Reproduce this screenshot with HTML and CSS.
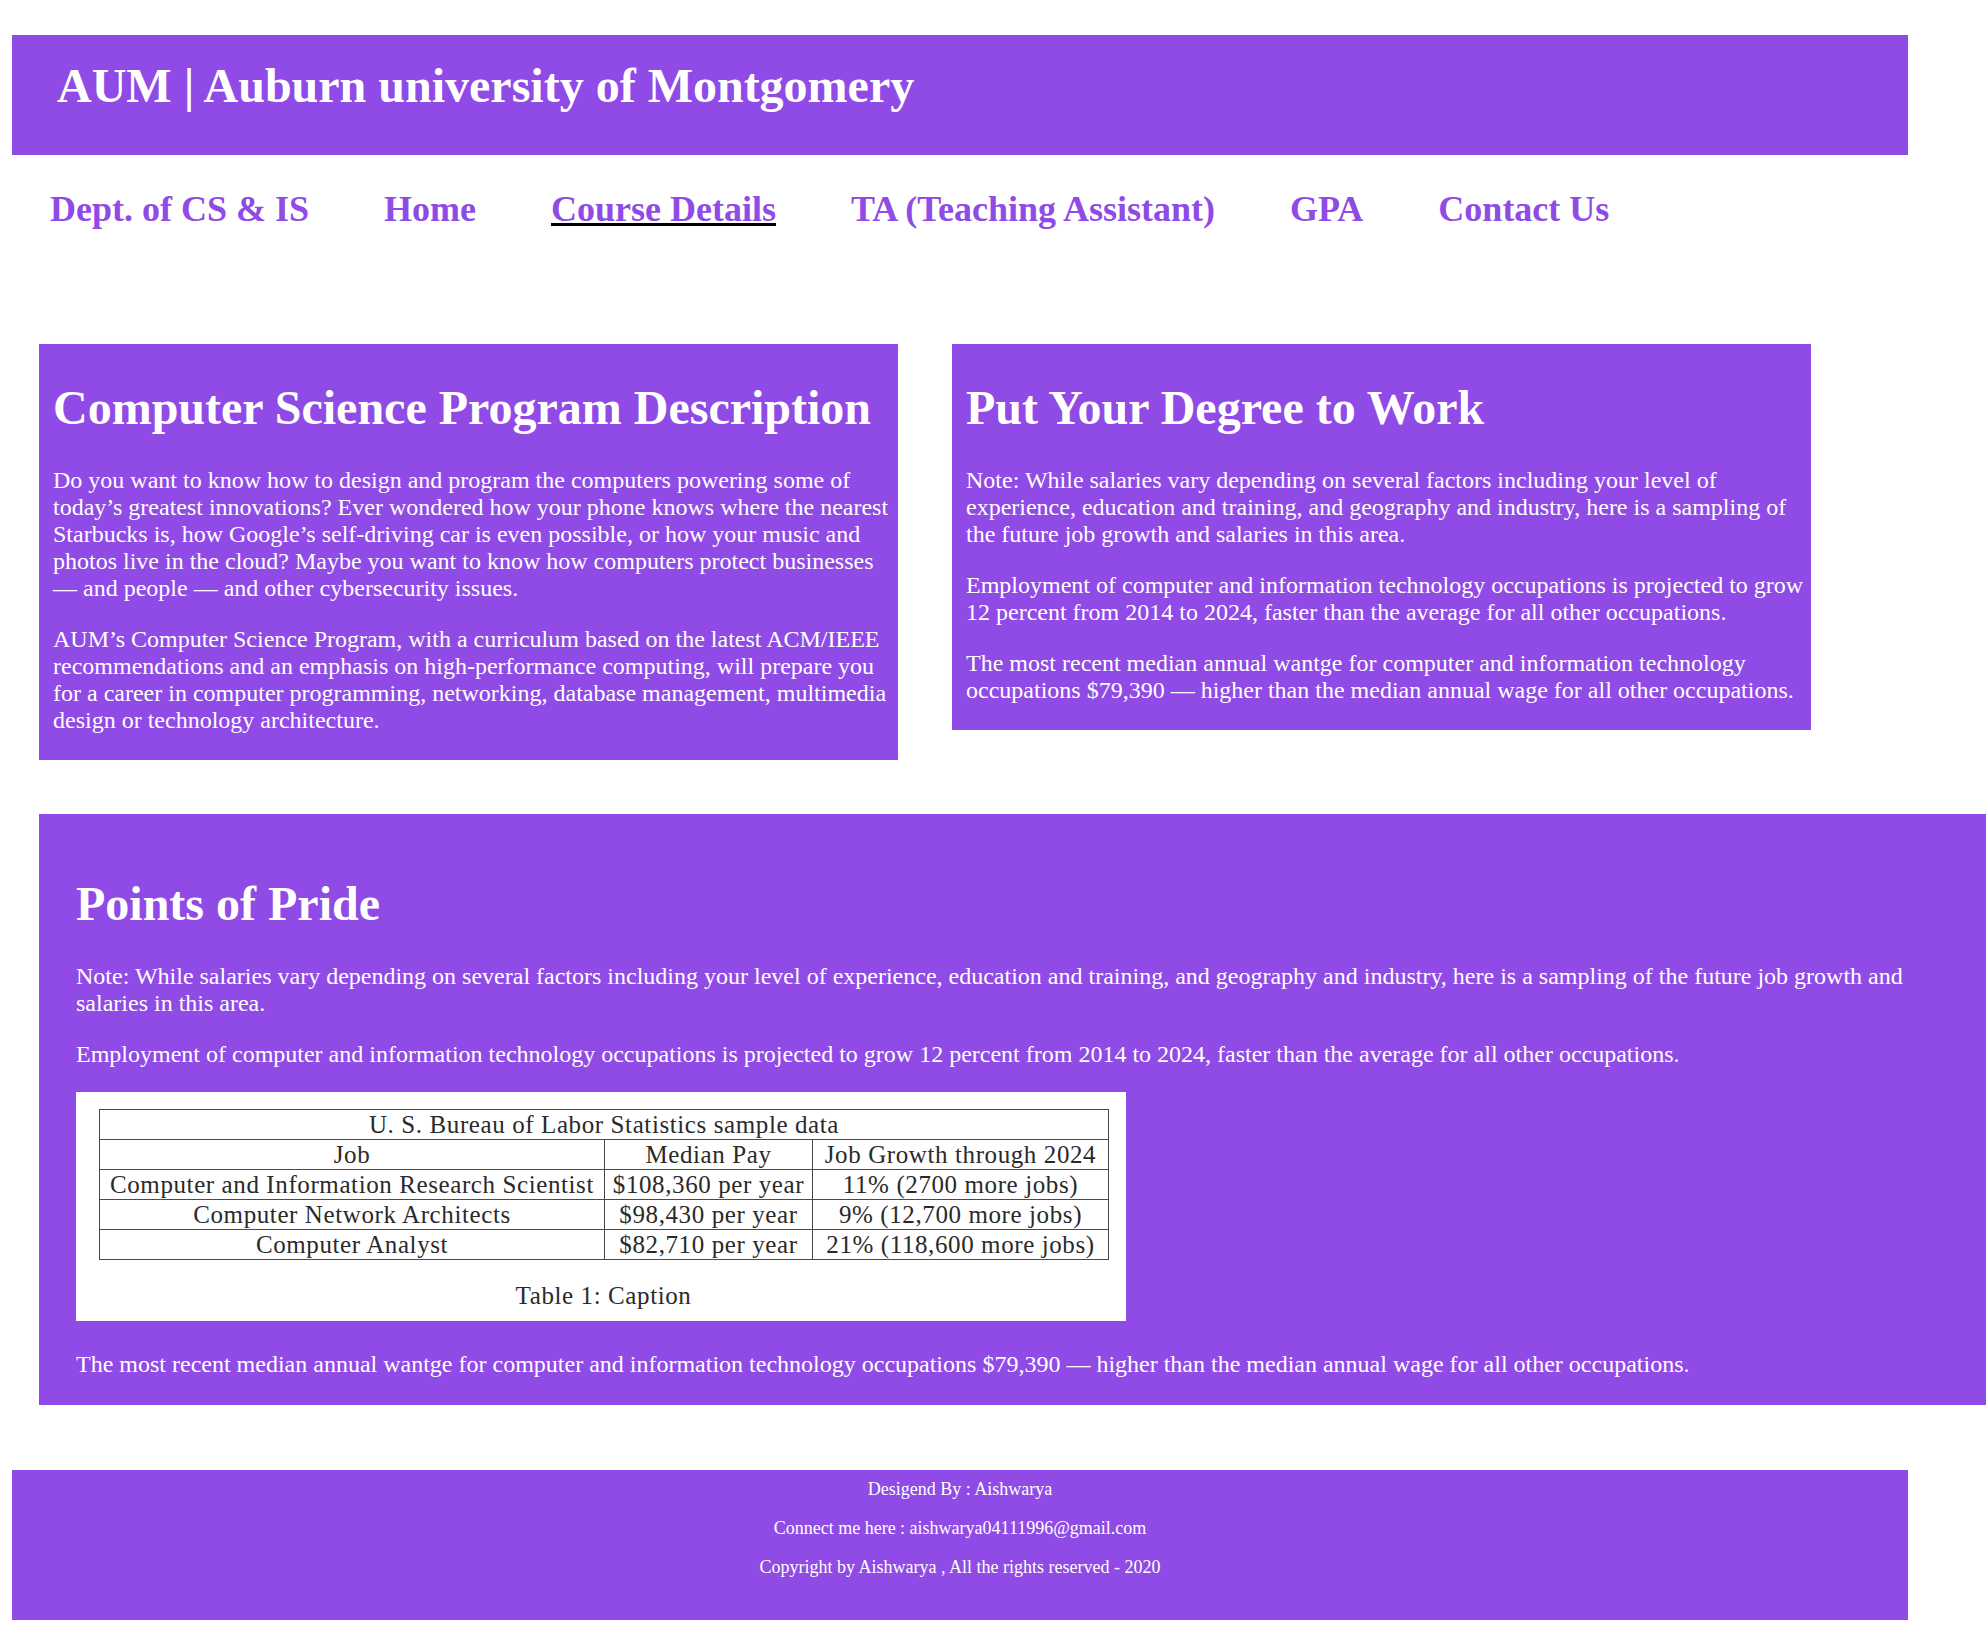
FILE: index.html
```html
<!DOCTYPE html>
<html lang="en">
<head>
<meta charset="utf-8">
<title>AUM | Course Details</title>
<link rel="stylesheet" href="styles.css">
</head>
<body>
<header class="site-header">
  <h1 class="site-title">AUM | Auburn university of Montgomery</h1>
</header>

<nav class="main-nav">
  <a class="nav-link" href="#">Dept. of CS &amp; IS</a>
  <a class="nav-link" href="#">Home</a>
  <a class="nav-link nav-link--active" href="#">Course Details</a>
  <a class="nav-link" href="#">TA (Teaching Assistant)</a>
  <a class="nav-link" href="#">GPA</a>
  <a class="nav-link" href="#">Contact Us</a>
</nav>

<div class="card-row">
  <section class="card">
    <h2 class="card-title">Computer Science Program Description</h2>
    <p class="text">Do you want to know how to design and program the computers powering some of today’s greatest innovations? Ever wondered how your phone knows where the nearest Starbucks is, how Google’s self-driving car is even possible, or how your music and photos live in the cloud? Maybe you want to know how computers protect businesses — and people — and other cybersecurity issues.</p>
    <p class="text">AUM’s Computer Science Program, with a curriculum based on the latest ACM/IEEE recommendations and an emphasis on high-performance computing, will prepare you for a career in computer programming, networking, database management, multimedia design or technology architecture.</p>
  </section>
  <section class="card">
    <h2 class="card-title">Put Your Degree to Work</h2>
    <p class="text">Note: While salaries vary depending on several factors including your level of experience, education and training, and geography and industry, here is a sampling of the future job growth and salaries in this area.</p>
    <p class="text">Employment of computer and information technology occupations is projected to grow 12 percent from 2014 to 2024, faster than the average for all other occupations.</p>
    <p class="text">The most recent median annual wantge for computer and information technology occupations $79,390 — higher than the median annual wage for all other occupations.</p>
  </section>
</div>

<section class="pride">
  <h2 class="card-title">Points of Pride</h2>
  <p class="text">Note: While salaries vary depending on several factors including your level of experience, education and training, and geography and industry, here is a sampling of the future job growth and salaries in this area.</p>
  <p class="text">Employment of computer and information technology occupations is projected to grow 12 percent from 2014 to 2024, faster than the average for all other occupations.</p>
  <div class="figure">
    <table class="stats">
      <colgroup>
        <col class="col-job">
        <col class="col-pay">
        <col class="col-growth">
      </colgroup>
      <tr><td colspan="3">U. S. Bureau of Labor Statistics sample data</td></tr>
      <tr><td>Job</td><td>Median Pay</td><td>Job Growth through 2024</td></tr>
      <tr><td>Computer and Information Research Scientist</td><td>$108,360 per year</td><td>11% (2700 more jobs)</td></tr>
      <tr><td>Computer Network Architects</td><td>$98,430 per year</td><td>9% (12,700 more jobs)</td></tr>
      <tr><td>Computer Analyst</td><td>$82,710 per year</td><td>21% (118,600 more jobs)</td></tr>
    </table>
    <div class="caption">Table 1: Caption</div>
  </div>
  <p class="text">The most recent median annual wantge for computer and information technology occupations $79,390 — higher than the median annual wage for all other occupations.</p>
</section>

<footer class="site-footer">
  <p class="footer-line">Desigend By : Aishwarya</p>
  <p class="footer-line">Connect me here : aishwarya04111996@gmail.com</p>
  <p class="footer-line">Copyright by Aishwarya , All the rights reserved - 2020</p>
</footer>
</body>
</html>
```

FILE: styles.css
```css
html, body {
  margin: 0;
  padding: 0;
  background: #ffffff;
}

body {
  font-family: "Liberation Serif", "Times New Roman", serif;
  color: #ffffff;
  overflow-x: hidden;
}

.site-header {
  background: #904ae6;
  margin: 35px 78px 0 12px;
  height: 120px;
  box-sizing: border-box;
  padding: 23px 0 0 45px;
}

.site-title {
  margin: 0;
  font-size: 48px;
  font-weight: bold;
  color: #ffffff;
}

.main-nav {
  display: flex;
  gap: 75px;
  margin-top: 33px;
  padding-left: 50px;
}

.nav-link {
  font-size: 36px;
  font-weight: bold;
  color: #904ae6;
  text-decoration: none;
}

.nav-link--active {
  text-decoration: underline;
  text-decoration-color: #000000;
  text-decoration-thickness: 3px;
}

.card-row {
  display: flex;
  align-items: flex-start;
  gap: 54px;
  margin-top: 114px;
  padding-left: 39px;
}

.card {
  background: #904ae6;
  width: 859px;
  box-sizing: border-box;
  padding: 4px 0 2px 14px;
  display: flow-root;
}

.card-title {
  font-size: 48px;
  font-weight: bold;
  margin: 32px 0;
  line-height: normal;
}

.text {
  font-size: 24px;
  line-height: 27px;
  margin: 24px 0;
}

.pride {
  background: #904ae6;
  margin: 54px 0 0 39px;
  padding: 30px 37px 3px 37px;
  display: flow-root;
}

.figure {
  background: #ffffff;
  width: 1050px;
  height: 229px;
  box-sizing: border-box;
  padding: 17px 0 0 23px;
  margin: 24px 0 30px;
  color: #2a2a2a;
  font-size: 25px;
  letter-spacing: 0.6px;
}

.stats {
  border-collapse: collapse;
  width: 1009px;
  table-layout: fixed;
}

.col-job { width: 505px; }
.col-pay { width: 208px; }
.col-growth { width: 296px; }

.stats td {
  border: 1.5px solid #4a4a4a;
  text-align: center;
  padding: 0;
  height: 29px;
  line-height: 29px;
  white-space: nowrap;
}

.caption {
  width: 1009px;
  text-align: center;
  margin-top: 21px;
  line-height: 29px;
}

.site-footer {
  background: #904ae6;
  margin: 65px 78px 0 12px;
  height: 150px;
  box-sizing: border-box;
  padding-top: 9px;
  text-align: center;
}

.footer-line {
  font-size: 18px;
  margin: 0 0 18px;
}
```
